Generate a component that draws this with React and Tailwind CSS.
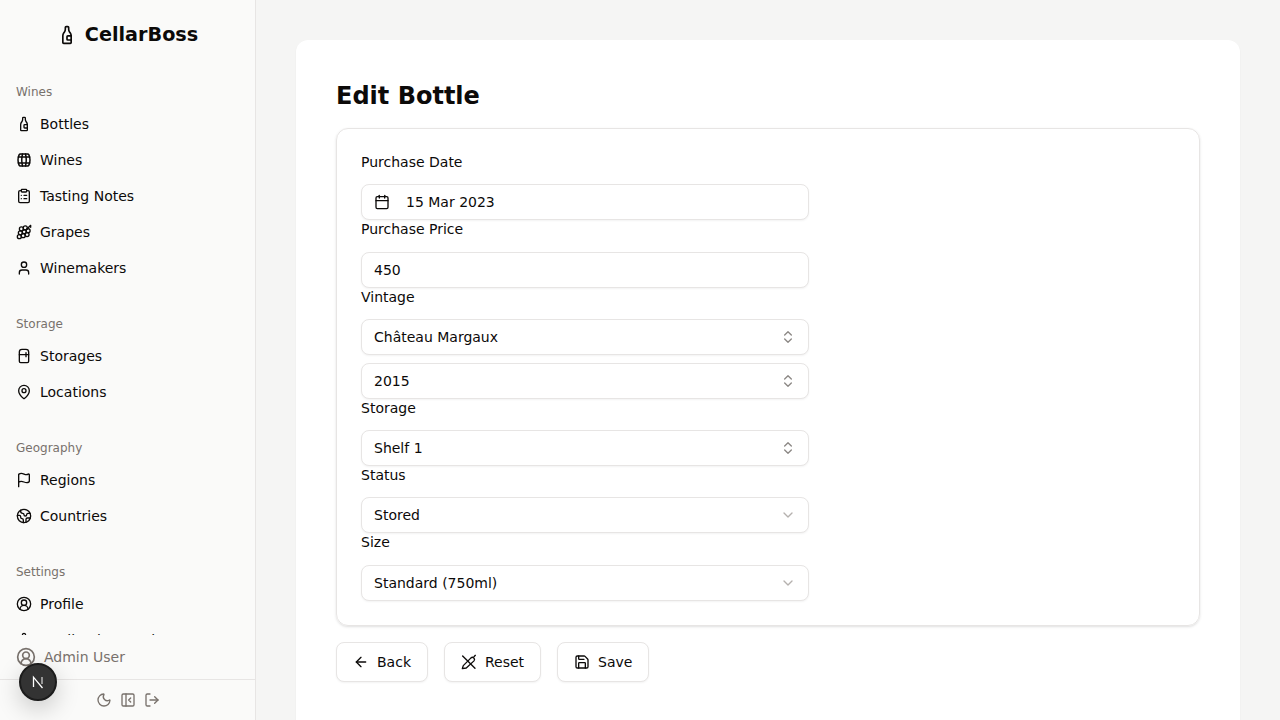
import React from 'react'
import {
  BottleWine, ClipboardList, Grape, User, Refrigerator, MapPin, Flag, Earth, CircleUserRound, Settings,
  Moon, PanelLeftClose, LogOut, ArrowLeft, Save, Calendar, ChevronsUpDown, ChevronDown,
} from 'lucide-react'
import { TbBarrel } from 'react-icons/tb'

const sections = [
  { title: 'Wines', items: [[BottleWine, 'Bottles'], [TbBarrel, 'Wines'], [ClipboardList, 'Tasting Notes'], [Grape, 'Grapes'], [User, 'Winemakers']] },
  { title: 'Storage', items: [[Refrigerator, 'Storages'], [MapPin, 'Locations']] },
  { title: 'Geography', items: [[Flag, 'Regions'], [Earth, 'Countries']] },
  { title: 'Settings', items: [[CircleUserRound, 'Profile'], [Settings, 'Application Settings']] },
]

// crossed pin and pen, no package has this one
function ResetIcon({ className }){
  return (
    <svg viewBox="0 0 24 24" className={className} fill="none" stroke="currentColor" strokeWidth="2" strokeLinecap="round" strokeLinejoin="round">
      <path d="M2.5 3 21 21.5" />
      <path d="M2 22l1.4-4.6L15 5.8a3.2 3.2 0 0 1 4.5 4.5L7.9 21z" />
      <path d="M21.5 2 19.5 4" />
    </svg>
  )
}

function Sidebar(){
  return (
    <aside className="w-[256px] h-full shrink-0 flex flex-col bg-[#fafaf9] border-r border-[#e7e5e4]">
      <div className="h-[68px] shrink-0 pt-[2px] flex items-center justify-center gap-2">
        <BottleWine className="w-5 h-5" />
        <span className="text-[19.2px] font-bold">CellarBoss</span>
      </div>
      <nav className="h-[567px] shrink-0 overflow-hidden px-4">
        {sections.map(s => (
          <div key={s.title} className="mb-[14px]">
            <div className="h-[38px] pt-[16px] text-xs leading-[16px] text-[#78716c]">{s.title}</div>
            {s.items.map(([Icon, label]) => (
              <div key={label} className="h-[36px] flex items-center gap-2 text-sm">
                {Icon === TbBarrel
                  ? <Icon className="w-[18px] h-[18px] -mx-px" />
                  : <Icon className="w-4 h-4" />}
                <span>{label}</span>
              </div>
            ))}
          </div>
        ))}
      </nav>
      <div className="h-[44px] shrink-0 px-4 flex items-center gap-2 text-sm text-[#78716c]">
        <CircleUserRound className="w-5 h-5" />
        <span>Admin User</span>
      </div>
      <div className="flex-1 border-t border-[#e7e5e4] flex items-center justify-center gap-2 text-[#78716c]">
        <Moon className="w-4 h-4" />
        <PanelLeftClose className="w-4 h-4" />
        <LogOut className="w-4 h-4" />
      </div>
    </aside>
  )
}

function Field({ label, children }){
  return (
    <>
      {label && <label className="block h-[16.25px] leading-[18px] mb-[15px] text-sm">{label}</label>}
      {children}
    </>
  )
}

function SelectBox({ value, chevron, className = '' }){
  return (
    <div className={`h-[36px] px-3 flex items-center justify-between bg-white border border-[#e7e5e4] rounded-lg shadow-xs text-sm ${className}`}>
      <span>{value}</span>
      {chevron
        ? <ChevronDown className="w-4 h-4 text-[#b5b1ae]" />
        : <ChevronsUpDown className="w-4 h-4 text-[#8c8885]" />}
    </div>
  )
}

function Btn({ icon: Icon, children }){
  return (
    <button className="h-[40px] px-4 flex items-center gap-2 bg-white border border-[#e7e5e4] rounded-lg shadow-xs text-sm">
      <Icon className="w-4 h-4" />
      {children}
    </button>
  )
}

export default function App(){
  return (
    <div className="w-[1280px] h-[720px] flex overflow-hidden relative bg-[#f5f5f4] text-[#0c0a09] font-['DejaVu_Sans',sans-serif]">
      <Sidebar />
      <main className="flex-1 px-10 pt-10 overflow-hidden">
        <div className="bg-white rounded-xl shadow-xs p-10 h-[720px]">
          <h1 className="text-2xl font-bold leading-[32px] mb-[16px]">Edit Bottle</h1>
          <div className="border border-[#e7e5e4] rounded-xl shadow-sm px-6 pt-6 h-[498px]">
            <div className="w-[448px]">
              <Field label="Purchase Date">
                <div className="h-[36px] pl-3 flex items-center gap-4 bg-white border border-[#e7e5e4] rounded-lg shadow-xs text-sm">
                  <Calendar className="w-4 h-4" />
                  <span>15 Mar 2023</span>
                </div>
              </Field>
              <Field label="Purchase Price">
                <div className="h-[36px] pl-3 flex items-center bg-white border border-[#e7e5e4] rounded-lg shadow-xs text-sm">450</div>
              </Field>
              <Field label="Vintage">
                <SelectBox value="Château Margaux" className="mb-2" />
                <SelectBox value="2015" />
              </Field>
              <Field label="Storage"><SelectBox value="Shelf 1" /></Field>
              <Field label="Status"><SelectBox value="Stored" chevron /></Field>
              <Field label="Size"><SelectBox value="Standard (750ml)" chevron /></Field>
            </div>
          </div>
          <div className="flex gap-4 mt-4">
            <Btn icon={ArrowLeft}>Back</Btn>
            <Btn icon={ResetIcon}>Reset</Btn>
            <Btn icon={Save}>Save</Btn>
          </div>
        </div>
      </main>
      <div className="absolute left-[19px] top-[663px] w-[38px] h-[38px] rounded-full bg-[#333] border-2 border-[#1c1c1c] shadow-[0_8px_24px_rgba(0,0,0,0.2)] flex items-center justify-center">
        <svg viewBox="0 0 16 16" className="w-[16px] h-[16px]" fill="none">
          <path d="M3.5 13V3.2L12.5 14" stroke="#fff" strokeWidth="1.3" />
          <path d="M12 3v7" stroke="#ccc" strokeWidth="1.3" />
        </svg>
      </div>
    </div>
  )
}
